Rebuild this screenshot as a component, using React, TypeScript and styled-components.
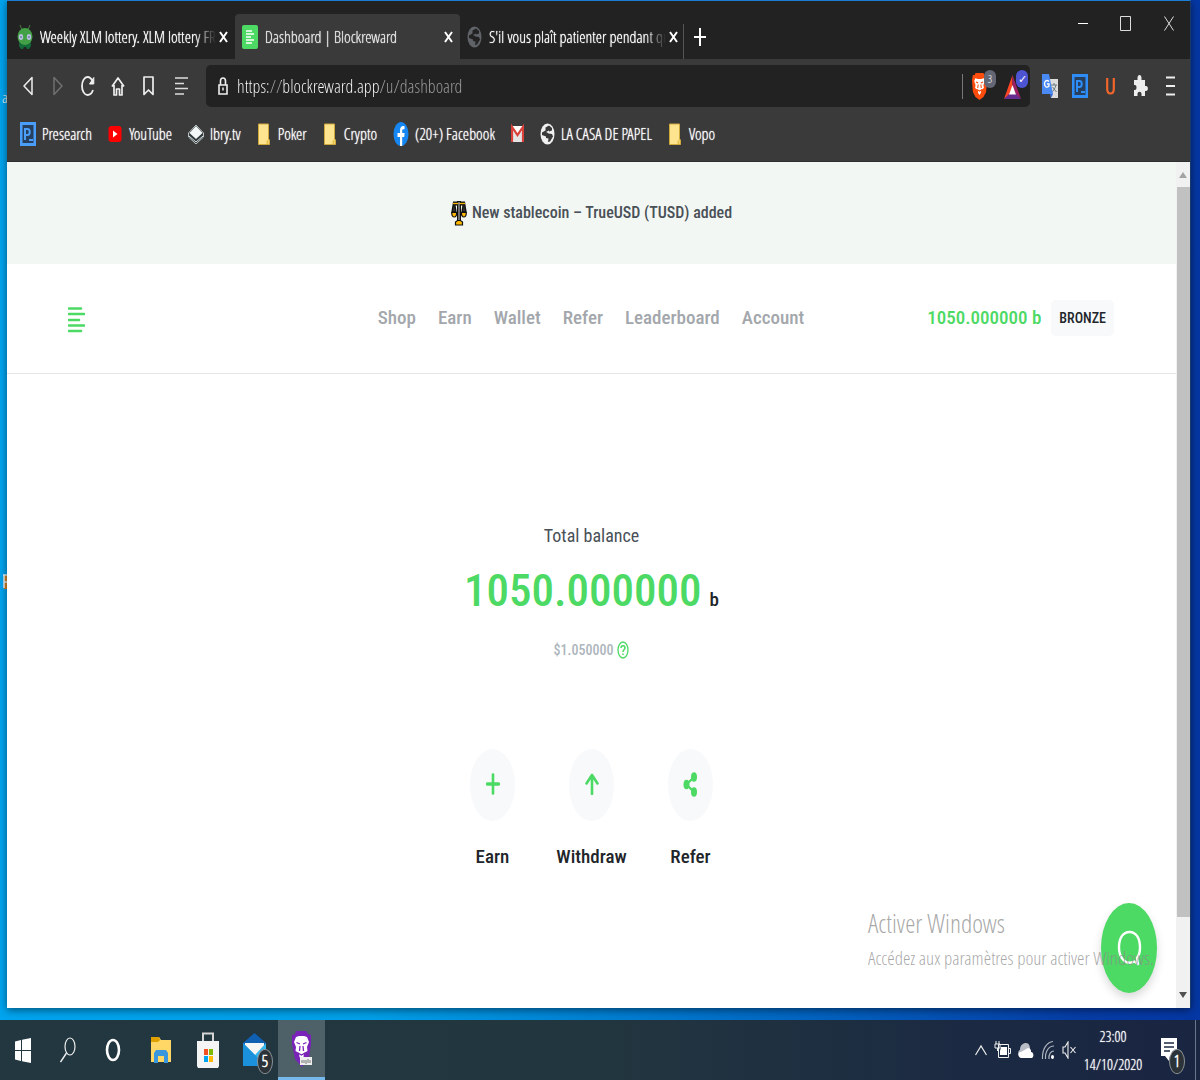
import React from 'react';
import styled, { createGlobalStyle } from 'styled-components';

const chromeFont = '"Open Sans Condensed Light", "Liberation Sans Narrow", "Liberation Sans", sans-serif';
const pageFont = '"Roboto Condensed", "Liberation Sans Narrow", "Liberation Sans", sans-serif';

const GlobalStyle = createGlobalStyle`
  * {
    box-sizing: border-box;
  }

  body {
    margin: 0;
    font-family: ${chromeFont};
  }

  button {
    font-family: inherit;
    border: none;
    background: none;
    padding: 0;
    color: inherit;
    cursor: pointer;
  }

  a {
    color: inherit;
    text-decoration: none;
  }

  svg {
    display: block;
    flex: none;
  }
`;

const Desktop = styled.div`
  position: relative;
  display: flex;
  flex-direction: column;
  min-height: 100vh;
  overflow: hidden;
  background: linear-gradient(90deg, #00a4ef 0%, #00a0e8 30%, #0268c4 65%, #063da6 90%, #0537a4 100%);
`;

const DesktopIcons = styled.div`
  position: absolute;
  left: 2px;
  top: 88px;
  color: white;
  font-size: 15px;
  line-height: 18px;
`;

const DesktopShortcut = styled.svg`
  margin-top: 468px;
`;

const BrowserWindow = styled.div`
  position: relative;
  flex: 1;
  display: flex;
  flex-direction: column;
  margin: 0 9px 12px 7px;
  border-top: 1px solid #1a7fd4;
  border-right: 1px solid #173a6b;
  background: white;
  box-shadow: 0 2px 8px rgba(0, 0, 0, 0.5);
`;

// Tab strip
const TabStrip = styled.div`
  display: flex;
  align-items: flex-end;
  height: 58px;
  padding-left: 3px;
  background: #222222;
`;

const TabItem = styled.div<{ $active?: boolean }>`
  display: flex;
  align-items: center;
  flex: 0 1 225px;
  gap: 7px;
  min-width: 0;
  height: 45px;
  padding: 0 7px;
  border-radius: 4px 4px 0 0;
  background: ${props => props.$active ? '#3a3a3a' : 'transparent'};
  color: ${props => props.$active ? '#e8e8e8' : '#ffffff'};
`;

const TabTitle = styled.button`
  flex: 1;
  min-width: 0;
  margin-right: -5px;
  overflow: hidden;
  white-space: nowrap;
  text-align: left;
  font-size: 16px;
  line-height: 22px;
  text-shadow: 0 0 1px currentColor;
  mask-image: linear-gradient(90deg, black 88%, transparent 100%);
`;

const TabClose = styled.button`
  display: flex;
  justify-content: center;
  width: 10px;
`;

const NewTab = styled.button`
  display: flex;
  align-items: center;
  justify-content: center;
  width: 33px;
  height: 35px;
  margin-left: -2px;
  padding-bottom: 10px;
  border-left: 1px solid #555555;
`;

const WindowControls = styled.div`
  display: flex;
  align-self: flex-start;
  margin-left: auto;
`;

const WindowControl = styled.button`
  display: flex;
  align-items: center;
  justify-content: center;
  width: 43px;
  height: 44px;
`;

// Navigation row
const Toolbar = styled.div`
  display: flex;
  align-items: center;
  height: 54px;
  padding: 0 5px 0 6px;
  background: #3a3a3a;
`;

const ToolButton = styled.button<{ $wide?: boolean }>`
  display: flex;
  align-items: center;
  justify-content: center;
  width: ${props => props.$wide ? 36 : 30}px;
  height: 36px;
`;

const AddressBar = styled.form`
  flex: 1;
  display: flex;
  align-items: center;
  gap: 9px;
  height: 42px;
  margin: 0 5px 0 7px;
  padding-left: 12px;
  border-radius: 5px;
  background: #222222;
`;

const AddressInput = styled.input`
  flex: 1;
  min-width: 0;
  border: none;
  outline: none;
  padding: 0;
  font-family: inherit;
  font-size: 18px;
  line-height: 26px;
  background: linear-gradient(90deg, #ffffff 0 31px, #a0a0a0 31px 44px, #ffffff 44px 143px, #a0a0a0 143px);
  background-clip: text;
  -webkit-background-clip: text;
  -webkit-text-fill-color: transparent;
`;

const ShieldGroup = styled.div`
  display: flex;
  align-items: center;
  gap: 6px;
  height: 25px;
  padding-left: 9px;
  border-left: 1px solid #777777;
`;

const ShieldButton = styled.button`
  position: relative;
  width: 26px;
  height: 28px;
`;

const ShieldBadge = styled.span<{ $color: string }>`
  position: absolute;
  top: -2px;
  right: 2px;
  width: 12px;
  height: 18px;
  border-radius: 6px;
  background: ${props => props.$color};
  color: white;
  font-size: 11px;
  line-height: 18px;
  text-align: center;
`;

// Bookmarks row
const BookmarkBar = styled.nav`
  display: flex;
  align-items: center;
  gap: 16px;
  height: 49px;
  padding: 0 13px 6px;
  overflow: hidden;
  background: #3a3a3a;
  border-bottom: 1px solid #2e2e2e;
`;

const Bookmark = styled.a`
  display: flex;
  align-items: center;
  gap: 6px;
  color: #ffffff;
  font-size: 16px;
  line-height: 24px;
  text-shadow: 0 0 1px currentColor;
  white-space: nowrap;
`;

// Web page
const Viewport = styled.div`
  position: relative;
  flex: 1;
  display: flex;
  background: white;
`;

const Page = styled.div`
  flex: 1;
  display: flex;
  flex-direction: column;
  min-width: 0;
  font-family: ${pageFont};
`;

const Announcement = styled.div`
  display: flex;
  align-items: center;
  justify-content: center;
  gap: 5px;
  height: 102px;
  background: #f3f7f4;
  color: #495057;
  font-size: 16px;
  line-height: 28px;
  font-weight: 500;
`;

const SiteHeader = styled.header`
  display: grid;
  grid-template-columns: 1fr auto 1fr;
  align-items: center;
  height: 110px;
  padding: 0 62px 2px 61px;
  border-bottom: 1px solid #e6e6e6;
`;

const Logo = styled.a`
  padding-top: 5px;
`;

const SiteNav = styled.nav`
  display: flex;
  gap: 22px;
  color: #a3a7ac;
  font-size: 19px;
  line-height: 28px;
  font-weight: 500;
`;

const Account = styled.div`
  display: flex;
  align-items: center;
  justify-content: flex-end;
  gap: 10px;
`;

const HeaderBalance = styled.span`
  color: #4cd964;
  font-size: 19px;
  line-height: 28px;
  font-weight: 500;
`;

const Tier = styled.span`
  padding: 4px 8px;
  border-radius: 5px;
  background: #f8f9fa;
  color: #212529;
  font-size: 14px;
  line-height: 28px;
  font-weight: 500;
`;

const Main = styled.main`
  flex: 1;
  display: flex;
  flex-direction: column;
  align-items: center;
  padding-top: 148px;
`;

const BalanceLabel = styled.h1`
  margin: 0;
  color: #495057;
  font-size: 18px;
  line-height: 28px;
  font-weight: 400;
`;

const Balance = styled.div`
  display: flex;
  align-items: baseline;
  gap: 8px;
  color: #212529;
  font-size: 19px;
  line-height: 28px;
  font-weight: 500;
`;

const Amount = styled.span`
  color: #4cd964;
  font-size: 45px;
  line-height: 82px;
`;

const Fiat = styled.div`
  display: flex;
  align-items: center;
  gap: 4px;
  margin-top: 6px;
  color: #adb5bd;
  font-size: 14px;
  line-height: 24px;
  font-weight: 500;
`;

const Actions = styled.div`
  display: flex;
  margin-top: 87px;
`;

const Action = styled.button`
  display: flex;
  flex-direction: column;
  align-items: center;
  gap: 22px;
  width: 99px;
  color: #212529;
  font-size: 19px;
  line-height: 28px;
  font-weight: 500;
`;

const ActionIcon = styled.span`
  display: flex;
  align-items: center;
  justify-content: center;
  width: 45px;
  height: 72px;
  padding-bottom: 2px;
  border-radius: 50%;
  background: #f8f9fb;
`;

const ChatButton = styled.button`
  position: absolute;
  right: 33px;
  bottom: 15px;
  display: flex;
  align-items: center;
  justify-content: center;
  width: 56px;
  height: 90px;
  border-radius: 50%;
  background: #4cd964;
  box-shadow: 0 5px 10px rgba(0, 0, 0, 0.15);
`;

const ActivationNotice = styled.div`
  position: absolute;
  right: 36px;
  bottom: 36px;
  color: rgba(140, 140, 140, 0.75);
  pointer-events: none;
`;

const NoticeTitle = styled.div`
  font-size: 26px;
  line-height: 34px;
`;

const NoticeText = styled.div`
  font-size: 19px;
  line-height: 28px;
  margin-top: 4px;
`;

const ScrollTrack = styled.div`
  display: flex;
  flex-direction: column;
  align-items: center;
  width: 14px;
  padding: 10px 0;
  background: #f1f1f1;
`;

const ScrollThumb = styled.div`
  width: 13px;
  flex: 730;
  margin: 9px 0 0 1px;
  background: #c1c1c1;
`;

const ScrollRest = styled.div`
  flex: 75;
`;

// Taskbar
const Taskbar = styled.footer`
  position: relative;
  display: flex;
  align-items: center;
  height: 60px;
  padding-right: 4px;
  background: linear-gradient(90deg, #22373f 0%, #22363f 50%, #1b2a42 80%, #1a2541 100%);
  color: white;
`;

const PinnedApps = styled.div`
  display: flex;
  margin-left: 2px;
`;

const TaskButton = styled.button<{ $active?: boolean; $app?: boolean }>`
  position: relative;
  display: flex;
  align-items: center;
  justify-content: center;
  width: ${props => props.$app ? 47 : 45}px;
  height: 60px;
  background: ${props => props.$active ? '#4e6169' : 'transparent'};
  border-bottom: ${props => props.$active ? '3px solid #76b9ed' : 'none'};
`;

const CountBadge = styled.span`
  position: absolute;
  left: 26px;
  top: 29px;
  width: 16px;
  height: 25px;
  border: 1px solid #8b9297;
  border-radius: 50%;
  background: #2b3338;
  font-size: 16px;
  line-height: 23px;
  font-weight: 700;
  text-align: center;
`;

const Tray = styled.div`
  display: flex;
  align-items: center;
  gap: 7px;
  margin-left: auto;
`;

const Clock = styled.button`
  width: 60px;
  font-size: 15px;
  line-height: 28px;
  text-align: center;
  text-shadow: 0 0 1px currentColor;
`;

const NotificationButton = styled(TaskButton)`
  width: 53px;
  border-right: 1px solid #6b7488;
`;

const CloseIcon = () => (
    <svg width="9" height="12" viewBox="0 0 9 12">
        <path d="M1 1l7 10M8 1L1 11" stroke="#fff" strokeWidth="2" fill="none" />
    </svg>
);

const AlienIcon = () => (
    <svg width="16" height="26" viewBox="0 0 16 26">
        <path d="M3 1l2 5M13 1l-2 5" stroke="#4d7a45" strokeWidth="1" />
        <path d="M2.500 16h11l.5 6-2 3h-2l-1-2H7l-1 2H4l-2-3z" fill="#146b3a" />
        <ellipse cx="8" cy="12.500" rx="7.500" ry="8.500" fill="#43a047" />
        <ellipse cx="4" cy="13" rx="2.200" ry="3" fill="#b7c3dd" />
        <ellipse cx="12" cy="13" rx="2.200" ry="3" fill="#b7c3dd" />
        <circle cx="4" cy="13" r="0.900" fill="#6a78a0" />
        <circle cx="12" cy="13" r="0.900" fill="#6a78a0" />
    </svg>
);

const LinesIcon = () => (
    <svg width="16" height="24" viewBox="0 0 16 24">
        <rect width="16" height="24" rx="2" fill="#4cd964" />
        <path d="M4 6h6M4 9h8M4 12h5M4 15h8M4 18h6" stroke="#fff" strokeWidth="1.6" />
    </svg>
);

const GlobeIcon = ({ color, hole }: { color: string; hole: string }) => (
    <svg width="15" height="22" viewBox="0 0 15 22">
        <ellipse cx="7.500" cy="11" rx="7" ry="10.500" fill={color} />
        <path d="M9 2.500L5.500 4.500v3L2 9.500v2.500l4 1.500v1.500l2.500.5-.5 3.500 2-.5 3-5-1-2.500-3.500-.500.5-2 3-1V5z" fill={hole} />
        <path d="M6 9l3-1.500v3z" fill={color} />
    </svg>
);

const PresearchIcon = ({ color }: { color: string }) => (
    <svg width="16" height="24" viewBox="0 0 16 24">
        <rect width="16" height="24" fill={color} />
        <path d="M2.500 3v18h11V3z" fill="#263f5e" />
        <path d="M5 18V7h2.500c3 0 3 6 0 6H5M9 18h4" stroke={color} strokeWidth="2" fill="none" />
    </svg>
);

const YouTubeIcon = () => (
    <svg width="15" height="24" viewBox="0 0 15 24">
        <rect x="0.500" y="4" width="13" height="16" rx="3" fill="#f00" />
        <path d="M5 8.500v7l4.500-3.500z" fill="#fff" />
    </svg>
);

const LbryIcon = () => (
    <svg width="16" height="24" viewBox="0 0 16 24">
        <path d="M8 3l7.500 8v4L8 22 .5 15v-4z" fill="#30383a" stroke="#b9c2c2" />
        <path d="M8 4l6.500 7L8 17 1.500 11z" fill="#f4f7f7" />
        <path d="M1 14l7 6 7-6" stroke="#dfe5e5" fill="none" />
    </svg>
);

const FolderIcon = () => (
    <svg width="15" height="24" viewBox="0 0 15 24">
        <path d="M1.500 2h10v15l1 1v4.500h-11z" fill="#ffe48f" stroke="#cfa93c" />
        <path d="M9.500 22v-3l2-2v5z" fill="#e8c24e" />
    </svg>
);

const FacebookIcon = () => (
    <svg width="16" height="24" viewBox="0 0 16 24">
        <ellipse cx="8" cy="12" rx="7.500" ry="12" fill="#1687f2" />
        <path d="M7 24v-9H4.500v-4H7V8.500C7 5.500 8.300 4 10.200 4l1.300.2v3h-1.200C9.400 7.200 9.200 8 9.200 9v2h2.400l-.4 4h-2v9z" fill="#fff" />
    </svg>
);

const GmailIcon = () => (
    <svg width="13" height="24" viewBox="0 0 13 24">
        <rect y="4" width="13" height="16" fill="#e4e4e4" />
        <path d="M0 4l6.500 8L13 4z" fill="#fff" />
        <path d="M1 20V5l5.500 8L12 5v15" stroke="#d9413a" strokeWidth="2.200" fill="none" />
    </svg>
);

const BraveIcon = () => (
    <svg width="15" height="28" viewBox="0 0 17 28" preserveAspectRatio="none">
        <path d="M4 1h9l1 2h2l1 5-1 12-3 5-4.500 3L4 25l-3-5L0 8l1-5h2z" fill="#ff4b0c" />
        <path d="M4 6l2 1h5l2-1 1.500 3-1.500 4 .5 3-3 2-.5 3-1.500 2-1.500-2-.5-3-3-2 .5-3L2.500 9z" fill="#fff" />
        <path d="M4.500 10l2.500 1M12.500 10L10 11M7 12.500L6.500 16M10 12.500l.5 3.500M5.500 17.500l3 1.500 3-1.500" stroke="#ff4b0c" fill="none" strokeWidth="1.200" />
    </svg>
);

const BatIcon = () => (
    <svg width="17" height="28" viewBox="0 0 17 28">
        <path d="M8.500 3L0 27l5-4 3.500-9z" fill="#ff4724" />
        <path d="M8.500 3L17 27l-5-4-3.500-9z" fill="#9e1f63" />
        <path d="M0 27h17l-5-5H5z" fill="#662d91" />
        <path d="M8.500 13L5 22.500h7z" fill="#fff" />
    </svg>
);

const TranslateIcon = () => (
    <svg width="16" height="26" viewBox="0 0 16 26">
        <path d="M7 6h9v19H9z" fill="#dcdcdc" />
        <path d="M9 12h6M12 10v2M14 12c-1 4-3 6-4 7M10.500 14l4 5" stroke="#6b7c80" fill="none" />
        <path d="M0 1h7l4 20H0z" fill="#4a8af4" />
        <path d="M7 8.500C4 6 2.500 9 2.500 11s2 4.500 4.500 2v-2H5" stroke="#fff" strokeWidth="1.300" fill="none" />
        <path d="M8 21h3l-2 4z" fill="#3367d6" />
    </svg>
);

const PuzzleIcon = () => (
    <svg width="15" height="24" viewBox="0 0 15 24">
        <path d="M1 6h3.500V4c0-4 4-4 4 0v2H12v6h1c2.500 0 2.500 5 0 5h-1v5H8.500v-2c0-3-4-3-4 0v2H1v-6h1c2 0 2-5 0-5H1z" fill="#eee" />
    </svg>
);

const ScalesIcon = () => (
    <svg width="16" height="26" viewBox="0 0 16 26">
        <path d="M2.500 3L1 12h4L3.500 3zM12.500 3L11 12h4l-1.500-9z" fill="#333" stroke="#111" strokeWidth="1.400" />
        <path d="M2 3.500h12" stroke="#111" strokeWidth="4" />
        <path d="M8 1v21" stroke="#111" strokeWidth="4" />
        <path d="M2 3.500h12" stroke="#f7b500" strokeWidth="1.300" />
        <path d="M8 2v20" stroke="#888" strokeWidth="1.600" />
        <path d="M.7 12.500h5c0 6-5 6-5 0zM10.300 12.500h5c0 6-5 6-5 0z" fill="#ffb900" stroke="#111" strokeWidth="1.200" />
        <path d="M4.500 25v-3l2-1.500h3l2 1.500v3z" fill="#ffb900" stroke="#111" strokeWidth="1.200" />
    </svg>
);

const ShareIcon = () => (
    <svg width="15" height="25" viewBox="0 0 15 25">
        <path d="M11 5L3.500 12.500 11 20" stroke="#4cd964" strokeWidth="2.200" fill="none" />
        <ellipse cx="11" cy="5" rx="3" ry="4.700" fill="#4cd964" />
        <ellipse cx="3.500" cy="12.500" rx="3" ry="4.700" fill="#4cd964" />
        <ellipse cx="11" cy="20" rx="3" ry="4.700" fill="#4cd964" />
    </svg>
);

const bookmarks = [
    { label: 'Presearch', icon: <PresearchIcon color="#4a9df8" /> },
    { label: 'YouTube', icon: <YouTubeIcon /> },
    { label: 'lbry.tv', icon: <LbryIcon /> },
    { label: 'Poker', icon: <FolderIcon /> },
    { label: 'Crypto', icon: <FolderIcon /> },
    { label: '(20+) Facebook', icon: <FacebookIcon /> },
    { label: '', icon: <GmailIcon /> },
    { label: 'LA CASA DE PAPEL', icon: <GlobeIcon color="#f0f0f0" hole="#3a3a3a" /> },
    { label: 'Vopo', icon: <FolderIcon /> },
];

const tabs = [
    { title: 'Weekly XLM lottery. XLM lottery FR', icon: <AlienIcon /> },
    { title: 'Dashboard | Blockreward', icon: <LinesIcon />, active: true },
    { title: "S'il vous plaît patienter pendant qu", icon: <GlobeIcon color="#5f6368" hole="#222222" /> },
];

const navLinks = ['Shop', 'Earn', 'Wallet', 'Refer', 'Leaderboard', 'Account'];

const App: React.FC = () => {
    return (
        <Desktop>
            <GlobalStyle />
            <DesktopIcons>
                a
                <DesktopShortcut width="6" height="16" viewBox="0 0 6 16">
                    <path d="M2 1h4v14H2z" fill="#d98324" />
                    <path d="M1 1h5M2 8h4M2 1v13" stroke="#e9f4fa" strokeWidth="1.500" fill="none" />
                </DesktopShortcut>
            </DesktopIcons>

            <BrowserWindow>
                <TabStrip>
                    {tabs.map(tab => (
                        <TabItem key={tab.title} $active={tab.active}>
                            {tab.icon}
                            <TabTitle>{tab.title}</TabTitle>
                            <TabClose aria-label="Close tab"><CloseIcon /></TabClose>
                        </TabItem>
                    ))}
                    <NewTab aria-label="New tab">
                        <svg width="12" height="18" viewBox="0 0 12 18">
                            <path d="M6 0v18M0 9h12" stroke="#fff" strokeWidth="2" />
                        </svg>
                    </NewTab>
                    <WindowControls>
                        <WindowControl aria-label="Minimize">
                            <svg width="10" height="1"><path d="M0 .5h10" stroke="#fff" /></svg>
                        </WindowControl>
                        <WindowControl aria-label="Maximize">
                            <svg width="11" height="15"><path d="M.5.5h10v14H.5z" stroke="#ddd" fill="none" /></svg>
                        </WindowControl>
                        <WindowControl aria-label="Close">
                            <svg width="10" height="15" viewBox="0 0 10 15"><path d="M.5.500l9 14M9.500.500l-9 14" stroke="#ddd" /></svg>
                        </WindowControl>
                    </WindowControls>
                </TabStrip>

                <Toolbar>
                    <ToolButton aria-label="Back">
                        <svg width="10" height="20" viewBox="0 0 10 20"><path d="M9 1.500v17L1 10z" stroke="#eee" strokeWidth="1.500" fill="none" strokeLinejoin="round" /></svg>
                    </ToolButton>
                    <ToolButton aria-label="Forward">
                        <svg width="10" height="20" viewBox="0 0 10 20"><path d="M1 1.500v17L9 10z" stroke="#707070" strokeWidth="1.500" fill="none" strokeLinejoin="round" /></svg>
                    </ToolButton>
                    <ToolButton aria-label="Reload">
                        <svg width="14" height="20" viewBox="0 0 14 20">
                            <path d="M12 14c-1 3-3 5-5.500 5C3.500 19 1 15 1 10s2.500-9 5.500-9C9 1 10.500 2.500 12 6" stroke="#eee" strokeWidth="1.800" fill="none" />
                            <path d="M12.800 1.500V8H8.500z" fill="#eee" stroke="#eee" />
                        </svg>
                    </ToolButton>
                    <ToolButton aria-label="Home">
                        <svg width="14" height="20" viewBox="0 0 14 20"><path d="M1 10.500L7 2l6 8.500M3 9v10h2.500v-6h3v6H11V9" stroke="#eee" strokeWidth="1.700" fill="none" strokeLinejoin="round" /></svg>
                    </ToolButton>
                    <ToolButton aria-label="Bookmark">
                        <svg width="11" height="20" viewBox="0 0 11 20"><path d="M1 1h9v17.500L5.500 14 1 18.500z" stroke="#eee" strokeWidth="1.700" fill="none" strokeLinejoin="round" /></svg>
                    </ToolButton>
                    <ToolButton aria-label="Reading list" $wide>
                        <svg width="13" height="18" viewBox="0 0 13 18"><path d="M0 1h13M0 6.500h9M0 11.500h13M0 17h9" stroke="#ddd" strokeWidth="1.500" /></svg>
                    </ToolButton>
                    <AddressBar onSubmit={event => event.preventDefault()}>
                        <svg width="10" height="18" viewBox="0 0 10 18">
                            <path d="M1 8h8v9H1zM2.500 8V4c0-4 5-4 5 0v4" stroke="#eee" strokeWidth="1.600" fill="none" />
                            <path d="M5 10.500v3" stroke="#eee" strokeWidth="1.500" />
                        </svg>
                        <AddressInput aria-label="Address" defaultValue="https://blockreward.app/u/dashboard" spellCheck={false} />
                        <ShieldGroup>
                            <ShieldButton>
                                <BraveIcon />
                                <ShieldBadge $color="#636674">3</ShieldBadge>
                            </ShieldButton>
                            <ShieldButton>
                                <BatIcon />
                                <ShieldBadge $color="#4c54d2">✓</ShieldBadge>
                            </ShieldButton>
                        </ShieldGroup>
                    </AddressBar>
                    <ToolButton aria-label="Translate"><TranslateIcon /></ToolButton>
                    <ToolButton aria-label="Presearch"><PresearchIcon color="#2f8df7" /></ToolButton>
                    <ToolButton aria-label="Uphold">
                        <svg width="9" height="17" viewBox="0 0 9 17"><path d="M1.200 0v11c0 6 6.600 6 6.600 0V0" stroke="#f2652b" strokeWidth="2.200" fill="none" /></svg>
                    </ToolButton>
                    <ToolButton aria-label="Extensions"><PuzzleIcon /></ToolButton>
                    <ToolButton aria-label="Menu">
                        <svg width="9" height="20" viewBox="0 0 9 20"><path d="M0 1.500h9M0 10h9M0 18.500h9" stroke="#eee" strokeWidth="2" /></svg>
                    </ToolButton>
                </Toolbar>

                <BookmarkBar>
                    {bookmarks.map((bookmark, index) => (
                        <Bookmark key={index} href="#" aria-label={bookmark.label || 'Gmail'}>
                            {bookmark.icon}
                            {bookmark.label}
                        </Bookmark>
                    ))}
                </BookmarkBar>

                <Viewport>
                    <Page>
                        <Announcement>
                            <ScalesIcon />
                            New stablecoin – TrueUSD (TUSD) added
                        </Announcement>
                        <SiteHeader>
                            <Logo href="#" aria-label="Blockreward">
                                <svg width="17" height="26" viewBox="0 0 17 26">
                                    <path d="M1 1.500h12M1 7h15M1 13h10M1 18.500h15M1 24h12" stroke="#4cd964" strokeWidth="2.600" strokeLinecap="round" />
                                </svg>
                            </Logo>
                            <SiteNav>
                                {navLinks.map(link => <a key={link} href="#">{link}</a>)}
                            </SiteNav>
                            <Account>
                                <HeaderBalance>1050.000000 b</HeaderBalance>
                                <Tier>BRONZE</Tier>
                            </Account>
                        </SiteHeader>
                        <Main>
                            <BalanceLabel>Total balance</BalanceLabel>
                            <Balance>
                                <Amount>1050.000000</Amount>
                                b
                            </Balance>
                            <Fiat>
                                $1.050000
                                <svg width="12" height="18" viewBox="0 0 12 18">
                                    <ellipse cx="6" cy="9" rx="5" ry="8" stroke="#4cd964" strokeWidth="1.300" fill="none" />
                                    <path d="M4 7c0-3 4-3 4 0 0 1.500-2 1.800-2 4M6 12.500v1.500" stroke="#4cd964" strokeWidth="1.500" fill="none" />
                                </svg>
                            </Fiat>
                            <Actions>
                                <Action>
                                    <ActionIcon>
                                        <svg width="14" height="22" viewBox="0 0 14 22"><path d="M7 1.500v19" stroke="#4cd964" strokeWidth="2.600" strokeLinecap="round" /><path d="M1.500 11h11" stroke="#4cd964" strokeWidth="3.400" strokeLinecap="round" /></svg>
                                    </ActionIcon>
                                    Earn
                                </Action>
                                <Action>
                                    <ActionIcon>
                                        <svg width="14" height="22" viewBox="0 0 14 22"><path d="M7 2v19M1.500 10.500L7 2l5.500 8.500" stroke="#4cd964" strokeWidth="2.600" strokeLinecap="round" strokeLinejoin="round" fill="none" /></svg>
                                    </ActionIcon>
                                    Withdraw
                                </Action>
                                <Action>
                                    <ActionIcon><ShareIcon /></ActionIcon>
                                    Refer
                                </Action>
                            </Actions>
                        </Main>
                    </Page>
                    <ScrollTrack>
                        <svg width="8" height="6"><path d="M4 0l4 6H0z" fill="#a3a3a3" /></svg>
                        <ScrollThumb />
                        <ScrollRest />
                        <svg width="8" height="6"><path d="M4 6L0 0h8z" fill="#505050" /></svg>
                    </ScrollTrack>
                    <ChatButton aria-label="Chat">
                        <svg width="25" height="36" viewBox="0 0 25 36">
                            <path d="M17.500 31.500C8 36 2 27 2 17.500 2 8 6 2 12.500 2S23 8 23 17.500c0 4-1 8-3 10.500l1 6z" stroke="#fff" strokeWidth="2.400" fill="none" strokeLinejoin="round" />
                        </svg>
                    </ChatButton>
                    <ActivationNotice>
                        <NoticeTitle>Activer Windows</NoticeTitle>
                        <NoticeText>Accédez aux paramètres pour activer Windows.</NoticeText>
                    </ActivationNotice>
                </Viewport>
            </BrowserWindow>

            <Taskbar>
                <TaskButton aria-label="Start">
                    <svg width="16" height="25" viewBox="0 0 16 25"><path d="M0 3.500L6 2v10H0zM7 1.800L16 0v12H7zM0 13h6v10l-6-1.500zM7 13h9v12l-9-1.800z" fill="#fff" /></svg>
                </TaskButton>
                <TaskButton aria-label="Search">
                    <svg width="16" height="26" viewBox="0 0 16 26"><ellipse cx="10" cy="9.500" rx="5" ry="8.500" stroke="#eee" strokeWidth="1.200" fill="none" /><path d="M6.500 16L.5 25" stroke="#eee" strokeWidth="1.400" /></svg>
                </TaskButton>
                <TaskButton aria-label="Cortana">
                    <svg width="16" height="24" viewBox="0 0 16 24"><ellipse cx="8" cy="12" rx="6" ry="10" stroke="#fff" strokeWidth="2.600" fill="none" /></svg>
                </TaskButton>
                <PinnedApps>
                    <TaskButton $app aria-label="File Explorer">
                        <svg width="22" height="28" viewBox="0 0 22 28">
                            <path d="M1 1h8l2 3h10v22H1z" fill="#ffd766" />
                            <path d="M1 1h8l1 3-2 2H1z" fill="#e0a100" />
                            <path d="M4 27V17l2-3h10l2 3v10h-4v-7H8v7z" fill="#3b97dd" />
                        </svg>
                    </TaskButton>
                    <TaskButton $app aria-label="Microsoft Store">
                        <svg width="22" height="36" viewBox="0 0 22 36">
                            <path d="M6 10V1.500h10V10" stroke="#d5d5d5" strokeWidth="2" fill="none" />
                            <path d="M0 9h22v25l-1 2H1l-1-2z" fill="#f4f4f4" />
                            <path d="M7 17h4v6H7z" fill="#f25022" /><path d="M12 17h4v6h-4z" fill="#7fba00" />
                            <path d="M7 24h4v6H7z" fill="#00a4ef" /><path d="M12 24h4v6h-4z" fill="#ffb900" />
                        </svg>
                    </TaskButton>
                    <TaskButton $app aria-label="Mail">
                        <svg width="23" height="34" viewBox="0 0 23 34">
                            <path d="M0 10L11.500 0 23 10v23H0z" fill="#0f5fb3" />
                            <path d="M2 10h19v12H2z" fill="#f5f5f5" />
                            <path d="M0 10l12 12 11-12v22l-1 1H1l-1-1z" fill="#33b6ee" />
                            <path d="M0 10l23 23H1l-1-1z" fill="#1b91dc" />
                        </svg>
                        <CountBadge>5</CountBadge>
                    </TaskButton>
                    <TaskButton $app $active aria-label="Brave Nightly">
                        <svg width="22" height="36" viewBox="0 0 22 36">
                            <path d="M5 0h10l2 3 3 1v9l-2 14-7 9-7-8L1 13V4l3-1z" fill="#7a23b8" />
                            <path d="M5 6l3-1h5l3 1 2 5-2 5 .5 4-3.500 2-.5 4-2 2-2-2-.5-4L4.500 20l.5-4-2-5z" fill="#fff" />
                            <path d="M5.500 11.500L9 13M15.500 11.500L12 13M9 15l-.5 5M12 15l.5 5M7 22l3.500 2 3.500-2" stroke="#7a23b8" fill="none" strokeWidth="1.300" />
                            <path d="M9 26h12v8H9z" fill="#eee" />
                            <path d="M11 29v3M13 29v3M15 29v4M17 28v4M19 29v3" stroke="#777" />
                        </svg>
                    </TaskButton>
                </PinnedApps>

                <Tray>
                    <svg width="12" height="12" viewBox="0 0 12 12"><path d="M.5 11L6 2l5.500 9" stroke="#eee" fill="none" strokeWidth="1.200" /></svg>
                    <svg width="17" height="18" viewBox="0 0 17 18">
                        <path d="M4.500 3.500h10v13h-10zM15 7.500h1.500v5H15" stroke="#eee" fill="none" />
                        <path d="M7 6h6v8H6v-4z" fill="#fff" />
                        <path d="M2 0v3M5 0v3M1 3h5v4H1zM3.500 7v3" stroke="#eee" fill="none" />
                    </svg>
                    <svg width="16" height="18" viewBox="0 0 16 18">
                        <path d="M2 9c0-5 3-7 6-7s4 3 4 6l3 8H3C-1 15 0 9 2 9z" fill="#b8bcc5" />
                        <path d="M3 17c-4-1-3-7 0-6l7-4c3 0 3 3 3 4 3 0 3 5 1 6z" fill="#fff" />
                    </svg>
                    <svg width="14" height="20" viewBox="0 0 14 20">
                        <path d="M1.500 19C1 9 6 2 12 1.500M4.500 19C4 11 8 6 13 6M8 19c-.5-5 2-8 5-8" stroke="#aeb4be" fill="none" strokeWidth="1.200" />
                        <ellipse cx="11.500" cy="17" rx="1.500" ry="2" fill="#fff" />
                    </svg>
                    <svg width="14" height="18" viewBox="0 0 14 18">
                        <path d="M1 6h2l3-5v16l-3-5H1zM8.500 6l5 6M13.500 6l-5 6" stroke="#eee" fill="none" strokeWidth="1.100" />
                    </svg>
                    <Clock>
                        23:00<br />14/10/2020
                    </Clock>
                </Tray>
                <NotificationButton aria-label="Notifications">
                    <svg width="16" height="26" viewBox="0 0 16 26">
                        <path d="M0 1h16v18h-7l-1 5-4-5H0z" fill="#fff" />
                        <path d="M3 6h10M3 10h10M3 14h6" stroke="#1b2a42" strokeWidth="1.300" />
                    </svg>
                    <CountBadge>1</CountBadge>
                </NotificationButton>
            </Taskbar>
        </Desktop>
    );
};

export default App;
